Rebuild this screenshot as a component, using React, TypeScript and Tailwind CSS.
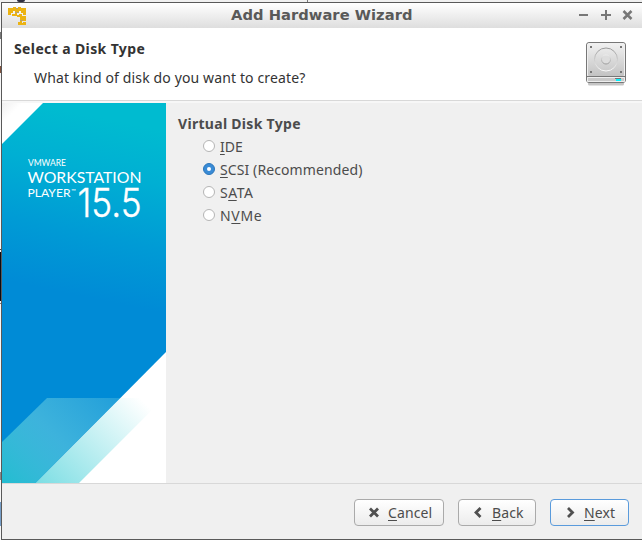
import React from 'react';

const ui = "font-['Noto_Sans',sans-serif]";

function Mnemonic({ text, at = 0 }: { text: string; at?: number }) {
  return (
    <>
      {text.slice(0, at)}
      <span className="underline decoration-1 underline-offset-2 [text-decoration-skip-ink:none]">{text[at]}</span>
      {text.slice(at + 1)}
    </>
  );
}

function AppIcon() {
  return (
    <svg width="18" height="18" viewBox="0 0 18 18" fill="#ecb312">
      <path d="M0 1H5V0H8V2H10V0H13V1H18V8H15V6H13V4H11V5H7V4H5V6H3V8H0Z" />
      <path d="M4 7H7V6H9V8H11V7H14V9H18V14H15V13H12V10H9V9H4Z" />
      <path d="M10 15H12V14H14V16H15V15H18V18H10Z" />
      <path d="M8 1h2v1H8zM7 5h4v1H7zM12 13h3v1h-3z" fill="#b7a06c" />
    </svg>
  );
}

function DiskIcon() {
  return (
    <svg width="44" height="46" viewBox="0 0 44 46" className="mt-0.5">
      <defs>
        <linearGradient id="metal" x1="0" y1="0" x2="0" y2="1">
          <stop offset="0" stopColor="#f1f1f1" />
          <stop offset="1" stopColor="#c2c2c2" />
        </linearGradient>
        <linearGradient id="ring" x1="0" y1="0" x2="0" y2="1">
          <stop offset="0" stopColor="#999" />
          <stop offset="1" stopColor="#fafafa" />
        </linearGradient>
        <linearGradient id="hub" x1="0" y1="0" x2="0" y2="1">
          <stop offset="0" stopColor="#eee" />
          <stop offset="1" stopColor="#999" />
        </linearGradient>
      </defs>
      <rect x="4" y="41" width="36" height="3.500" rx="1.500" fill="#c5c5c5" />
      <rect x="2.500" y="1.500" width="39" height="40" rx="2.500" fill="#d0d0d0" stroke="#777" />
      <rect x="3.500" y="2.500" width="37" height="33" rx="1.500" fill="url(#metal)" stroke="#f0f0f0" />
      <path d="M3 35.500H41" stroke="#777" />
      <path d="M3.500 36.500H40.500V40.500H3.500Z" fill="#c9c9c9" stroke="#eee" />
      <circle cx="22" cy="18.500" r="11.500" fill="none" stroke="url(#ring)" />
      <circle cx="22" cy="18.500" r="4.500" fill="#ddd" stroke="url(#hub)" />
      <path d="M6 5h2v2H6zM36 5h2v2h-2zM6 30h2v2H6zM36 30h2v2h-2z" fill="#777" />
      <path d="M31 37h6v1h-6z" fill="#777" />
      <path d="M32 38h5v2h-5z" fill="#00f4ff" />
    </svg>
  );
}

function Banner() {
  return (
    <svg width="164" height="380" viewBox="0 0 164 380" className="shrink-0">
      <defs>
        <linearGradient id="sky" gradientUnits="userSpaceOnUse" x1="100" y1="15" x2="64" y2="190">
          <stop offset="0" stopColor="#00bbd0" />
          <stop offset="0.300" stopColor="#00afd3" />
          <stop offset="0.650" stopColor="#009bd5" />
          <stop offset="1" stopColor="#008bd6" />
        </linearGradient>
        <linearGradient id="band" gradientUnits="userSpaceOnUse" x1="0" y1="380" x2="100" y2="280">
          <stop offset="0" stopColor="#24bfd0" stopOpacity="0.950" />
          <stop offset="0.500" stopColor="#62cbe0" stopOpacity="0.620" />
          <stop offset="1" stopColor="#73cfe2" stopOpacity="0.300" />
        </linearGradient>
        <linearGradient id="fade" gradientUnits="userSpaceOnUse" x1="38" y1="395" x2="138" y2="295">
          <stop offset="0" stopColor="#75dce2" />
          <stop offset="1" stopColor="#fff" />
        </linearGradient>
        <linearGradient id="corner" x1="0" y1="0" x2="0.500" y2="0.500">
          <stop offset="0" stopColor="#f0f0f0" />
          <stop offset="0.500" stopColor="#fff" />
        </linearGradient>
      </defs>
      <rect width="164" height="380" fill="url(#sky)" />
      <path d="M0 0H41L0 41Z" fill="url(#corner)" />
      <path d="M164 249V380H34Z" fill="#fff" />
      <path d="M45 295H119L34 380H0V339Z" fill="url(#band)" />
      <path d="M119 295H162L77 380H34Z" fill="url(#fade)" />
      <g fill="#fff" fontFamily="Lato, sans-serif">
        <text x="26" y="63" fontSize="9" textLength="38" lengthAdjust="spacingAndGlyphs">VMWARE</text>
        <text x="25.500" y="80" fontSize="15.500" textLength="114" lengthAdjust="spacingAndGlyphs">WORKSTATION</text>
        <text x="25.500" y="94" fontSize="12" textLength="43" lengthAdjust="spacingAndGlyphs">PLAYER</text>
        <text x="69" y="90" fontSize="6" textLength="5">™</text>
        <text x="75.500" y="114" fontSize="39.500" fontFamily="Inter, sans-serif" fontWeight="300" stroke="#fff" strokeWidth="0.400" textLength="64" lengthAdjust="spacingAndGlyphs">15.5</text>
      </g>
    </svg>
  );
}

function Option({ label, at = 0, checked = false, spacing }: { label: string; at?: number; checked?: boolean; spacing: string }) {
  return (
    <label className="flex h-[23px] items-center">
      <span className={`mr-[5px] mb-0.5 flex size-3 shrink-0 items-center justify-center rounded-full border ${checked ? 'border-[#2c76ba] bg-[#398bd6]' : 'border-[#b5b5b5] bg-white'}`}>
        {checked && <span className="size-1 rounded-full bg-white" />}
      </span>
      <span className={spacing}><Mnemonic text={label} at={at} /></span>
    </label>
  );
}

const glyphs = {
  cross: 'M2 1.500L10 9.500M10 1.500L2 9.500',
  left: 'M8.500 1L4 5.500L8.500 10',
  right: 'M4 1L8.500 5.500L4 10',
};

function Button({ label, icon, size, primary = false }: { label: string; icon: keyof typeof glyphs; size: string; primary?: boolean }) {
  return (
    <button className={`flex h-[27px] items-center rounded border bg-linear-to-b from-white to-[#ececec] pl-[13px] whitespace-nowrap ${size} ${primary ? 'border-[#5a9bdc]' : 'border-[#aaa]'}`}>
      <svg width="12" height="11" viewBox="0 0 12 11" fill="none" stroke="#505050" strokeWidth="2.800" className="mr-2 mb-px shrink-0">
        <path d={glyphs[icon]} />
      </svg>
      <span className="tracking-[0.1px]"><Mnemonic text={label} /></span>
    </button>
  );
}

export default function App() {
  return (
    <div className={`flex h-[540px] w-[642px] flex-col overflow-hidden bg-[#f0f0f0] text-[14px] leading-5 text-[#4c4c4c] ${ui}`}>
      <div className="flex h-0.5 shrink-0">
        <div className="ml-[17px] h-0.5 w-2 rounded-b bg-[#303040]" />
        <div className="ml-[282px] w-px bg-[#777]" />
      </div>
      <div className="flex h-[538px]">
        <div className="flex w-px shrink-0 flex-col bg-[#f7f7f7]">
          <div className="mt-[30px] h-[7px] bg-[#777]" />
          <div className="mt-[27px] h-[7px] bg-[#80533e]" />
          <div className="mt-[176px] h-px bg-[#444]" />
          <div className="mt-0.5 h-[49px] bg-[#0a0a12]" />
          <div className="mt-[2px] h-px bg-[#777]" />
          <div className="mt-[168px] h-2 bg-[#888]" />
          <div className="mt-[22px] h-6 bg-[#769ec8]" />
        </div>
        <div className="flex flex-1 flex-col border-y border-l border-[#595959]">
          <header className="flex h-[25px] shrink-0 items-center bg-linear-to-b from-white to-[#dedede] pl-[6px]">
            <AppIcon />
            <h1 className="ml-[205px] w-[182px] pb-px font-['DejaVu_Sans',sans-serif] text-[14.7px] font-bold tracking-[0.04px] whitespace-nowrap text-[#595959]">Add Hardware Wizard</h1>
            <svg width="56" height="13" viewBox="0 0 56 13" fill="none" stroke="#777" strokeWidth="2" className="mb-[3px] ml-[166px] shrink-0">
              <path d="M0 7H9M22 7H32M27 2V12" />
              <path d="M44.500 3L52.500 11M52.500 3L44.500 11" strokeWidth="2.500" />
            </svg>
          </header>
          <section className="flex h-[72px] shrink-0 justify-between bg-white pt-[11px] pr-[14px] pl-3 text-[#333]">
            <div className="whitespace-nowrap">
              <h2 className="font-bold tracking-[0.38px]">Select a Disk Type</h2>
              <p className="mt-[9px] ml-5 tracking-[0.13px]">What kind of disk do you want to create?</p>
            </div>
            <DiskIcon />
          </section>
          <div className="h-[3px] shrink-0 border-t border-[#d8d8d8] bg-[#f7f7f7]" />
          <main className="flex h-[380px] shrink-0">
            <Banner />
            <div className="pt-[11px] pl-3 whitespace-nowrap">
              <h3 className="font-bold tracking-[0.3px]">Virtual Disk Type</h3>
              <div className="mt-px ml-[25px]">
                <Option label="IDE" spacing="" />
                <Option label="SCSI (Recommended)" checked spacing="tracking-[0.1px]" />
                <Option label="SATA" at={1} spacing="tracking-[0.5px]" />
                <Option label="NVMe" at={1} spacing="tracking-[0.7px]" />
              </div>
            </div>
          </main>
          <footer className="flex flex-1 items-start justify-end gap-[14px] border-t border-[#d8d8d8] pt-[15px] pr-[13px]">
            <Button label="Cancel" icon="cross" size="w-[90px]" />
            <Button label="Back" icon="left" size="w-[78px]" />
            <Button label="Next" icon="right" size="w-[79px]" primary />
          </footer>
        </div>
      </div>
    </div>
  );
}
